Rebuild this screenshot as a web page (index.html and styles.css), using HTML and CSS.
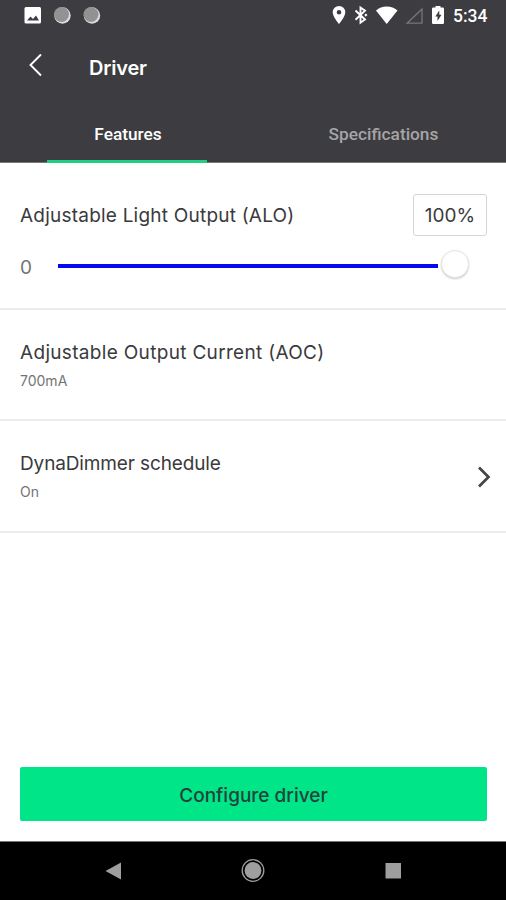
FILE: index.html
```html
<!DOCTYPE html>
<html lang="en">
    <head>
        <meta charset="UTF-8">
        <meta name="viewport" content="width=device-width, initial-scale=1.0">
        <title>Driver</title>
        <link rel="stylesheet" href="styles.css">
    </head>
    <body>
        <header class="header">
            <div class="status-bar">
                <svg width="110" height="32" viewBox="0 0 110 32">
                    <rect x="24.500" y="7" width="16.500" height="16.500" rx="1.500" fill="#fff"/>
                    <path d="M27 20.500l3.500-4 2.500 2.500 3-3.500 3 5z" fill="#3d3c40"/>
                    <circle cx="62.500" cy="15.500" r="8.200" fill="#ddd"/>
                    <circle cx="61.500" cy="14.500" r="7.500" fill="#929292"/>
                    <circle cx="92" cy="15.500" r="8.200" fill="#ddd"/>
                    <circle cx="91" cy="14.500" r="7.500" fill="#929292"/>
                </svg>
                <svg class="status-right" width="118" height="32" viewBox="330 0 118 32">
                    <path d="M339 6a6.300 6.300 0 0 0-6.300 6.300c0 4.500 6.300 11.700 6.300 11.700s6.300-7.200 6.300-11.700A6.300 6.300 0 0 0 339 6zm0 4a2.300 2.300 0 1 1 0 4.600a2.300 2.300 0 0 1 0-4.600z" fill="#fff"/>
                    <path d="M355.500 10.500l9.500 9-4.500 3.200V7.500l4.500 3.200-9.500 9" fill="none" stroke="#fff" stroke-width="1.900"/>
                    <path d="M365.800 13.400l1.700 1.700-1.700 1.700-1.500-1.700z" fill="#fff"/>
                    <path d="M376 10.500c3-2.600 6.500-4 10.700-4s7.800 1.400 10.800 4L386.700 24z" fill="#fff"/>
                    <path d="M407 23.200L422 9v14.200z" fill="none" stroke="#77767a" stroke-width="1.300"/>
                    <path d="M435.500 6h5v1.500h2.200q1.300 0 1.300 1.300v14q0 1.200-1.200 1.200h-9.600q-1.200 0-1.200-1.200v-14q0-1.300 1.300-1.300h2.200z" fill="#fff"/>
                    <path d="M439.300 10.500l-4 6h2.200V21l4-6.300h-2.200z" fill="#3d3c40"/>
                </svg>
                <span class="clock">5:34</span>
            </div>
            <div class="app-bar">
                <svg class="back" width="14" height="24" viewBox="0 0 14 24">
                    <path d="M13 1.500L2.500 12l10.500 10.500" fill="none" stroke="#fff" stroke-width="1.900"/>
                </svg>
                <h1>Driver</h1>
            </div>
            <nav class="tabs">
                <div class="tab active"><span>Features</span></div>
                <div class="tab"><span>Specifications</span></div>
            </nav>
        </header>
        <main class="content">
            <section class="row output">
                <div class="output-top">
                    <h2 class="alo">Adjustable Light Output (ALO)</h2>
                    <div class="value">100%</div>
                </div>
                <div class="slider">
                    <span class="min">0</span>
                    <div class="track"></div>
                    <div class="thumb"></div>
                </div>
            </section>
            <section class="row">
                <div>
                    <h2 class="aoc">Adjustable Output Current (AOC)</h2>
                    <p>700mA</p>
                </div>
            </section>
            <section class="row last">
                <div>
                    <h2 class="dyna">DynaDimmer schedule</h2>
                    <p>On</p>
                </div>
                <svg class="chevron" width="16" height="24" viewBox="0 0 16 24">
                    <path d="M3 2.500l9.500 9.500L3 21.500" fill="none" stroke="#454545" stroke-width="2.700"/>
                </svg>
            </section>
            <button class="configure">Configure driver</button>
        </main>
        <footer class="nav-bar">
            <svg width="506" height="58" viewBox="0 0 506 58">
                <path d="M105.500 29L121 20.500v17z" fill="#9e9e9e"/>
                <circle cx="253" cy="28.500" r="10.800" fill="none" stroke="#9e9e9e" stroke-width="1.300"/>
                <circle cx="253" cy="28.500" r="8.400" fill="#9e9e9e"/>
                <rect x="385.500" y="21" width="15.500" height="15.500" fill="#9e9e9e"/>
            </svg>
        </footer>
    </body>
</html>
```
FILE: styles.css
```css
* { box-sizing: border-box; }
body {
    margin: 0;
    width: 506px;
    height: 900px;
    display: flex;
    flex-direction: column;
    background: #fff;
    color: #3a3a3c;
    font-family: Inter, "Liberation Sans", sans-serif;
    overflow: hidden;
}
h1, h2, p { margin: 0; }
svg { display: block; flex: none; }
.header {
    height: 163px;
    background: #3d3c40;
    color: #fff;
    border-bottom: 1px solid #77777a;
    font-family: Roboto, sans-serif;
}
.status-bar {
    height: 32px;
    display: flex;
    align-items: center;
}
.status-right { margin-left: 220px; }
.clock {
    margin-left: 5px;
    font-size: 17.5px;
    font-weight: 500;
    line-height: 32px;
}
.app-bar {
    height: 72px;
    display: flex;
    align-items: center;
    padding-left: 28px;
}
.back { margin-bottom: 6px; }
.app-bar h1 {
    margin-left: 47px;
    font-family: Inter, sans-serif;
    font-size: 20px;
    font-weight: 600;
    letter-spacing: -0.2px;
}
.tabs {
    height: 59px;
    display: grid;
    grid-template-columns: 254px 252px;
}
.tab {
    display: flex;
    justify-content: center;
    padding-left: 7px;
    font-size: 17.3px;
    font-weight: 500;
    line-height: 61px;
    color: #a5a5a7;
}
.tab.active {
    padding: 0;
    color: #fff;
}
.active span {
    width: 160px;
    height: 59px;
    padding-left: 2px;
    text-align: center;
    border-bottom: 3px solid #1fd082;
}
.content {
    flex: 1;
    display: flex;
    flex-direction: column;
}
.row {
    height: 111px;
    display: flex;
    justify-content: space-between;
    align-items: center;
    padding: 1px 14px 0 20px;
    border-bottom: 2px solid #ececec;
}
.row.last {
    height: 112px;
    padding-top: 0;
    padding-bottom: 1px;
}
.row h2 {
    font-size: 19px;
    font-weight: 400;
    line-height: 28px;
    white-space: nowrap;
}
.row h2.alo {
    padding-top: 1px;
    letter-spacing: 0.22px;
}
.row h2.aoc { letter-spacing: 0.32px; }
.row h2.dyna { letter-spacing: -0.13px; }
.row p {
    margin-top: 4px;
    font-size: 14px;
    line-height: 20px;
    color: #747474;
}
.chevron { margin-top: 2px; }
.row.output {
    height: 147px;
    display: block;
    padding: 31px 19px 0 20px;
}
.output-top {
    display: flex;
    justify-content: space-between;
    align-items: center;
}
.value {
    width: 74px;
    height: 42px;
    border: 1px solid #d6d6d6;
    border-radius: 3px;
    font-size: 19px;
    line-height: 41px;
    text-align: center;
}
.slider {
    display: flex;
    align-items: center;
    margin-top: 13px;
    height: 30px;
}
.min {
    width: 38px;
    padding-top: 6px;
    font-size: 19px;
    color: #747474;
}
.track {
    width: 380px;
    height: 4px;
    margin-top: 4px;
    background: #0808ee;
}
.thumb {
    width: 28px;
    height: 28px;
    margin-left: 3px;
    border-radius: 50%;
    border: 1px solid #e6e6e6;
    background: #fff;
    box-shadow: 0 1px 2px #ccc;
}
.configure {
    margin: auto 19px 20px 20px;
    height: 54px;
    padding-top: 3px;
    border: none;
    border-radius: 2px;
    background: #00e588;
    color: #24433a;
    font-family: inherit;
    font-size: 19px;
    font-weight: 500;
}
.nav-bar {
    height: 59px;
    background: #000;
    border-top: 1px solid #777;
}
```
